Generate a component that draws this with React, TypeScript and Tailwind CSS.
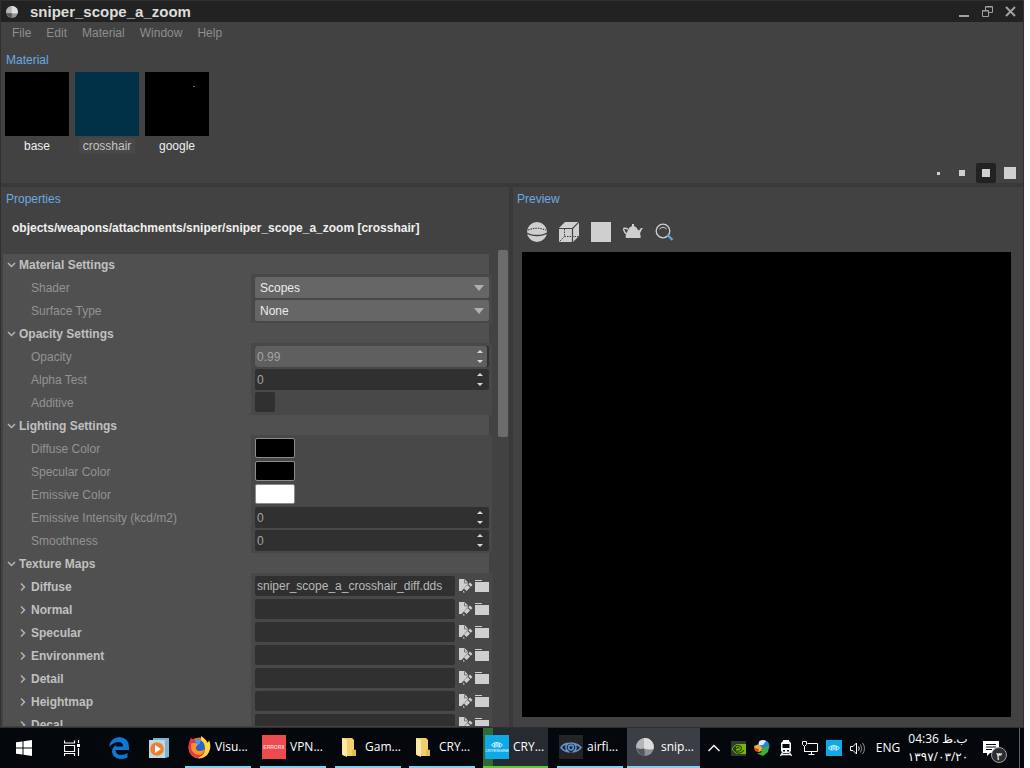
import React, { useState } from "react";

const materials = [
  { name: "base", color: "bg-black" },
  { name: "crosshair", color: "bg-[#003146]" },
  { name: "google", color: "bg-black" },
];

const textures = ["Diffuse", "Normal", "Specular", "Environment", "Detail", "Heightmap", "Decal"];

const MaterialLogo = ({ size }: { size: number }) => (
  <svg width={size} height={size} viewBox="0 0 18 18" className="shrink-0">
    <circle cx="9" cy="9" r="9" fill="#8f9192" />
    <path d="M8 0 Q13 -.5 16 3.500 Q18.500 7 17.500 11 Q13 12 8 10.500Z" fill="#dedede" />
    <path d="M8 0 V10.500 Q4 11.500 .5 10 Q-.5 6 2.500 3 Q5 .5 8 0Z" fill="#b3b5b6" />
    <path d="M.5 10 Q4 11.500 8 10.500 Q9.500 14 8.500 18 Q3 17.500 .5 10Z" fill="#55575a" />
  </svg>
);

const EyeMark = ({ width, color }: { width: number; color: string }) => (
  <svg width={width} height={width / 2} viewBox="0 0 24 12" fill="none" stroke={color} strokeWidth="1.700">
    <path d="M9 1.500 Q4 2 1 6 Q4 10 9 10.500 Q6.500 8.500 6.500 6 Q6.500 2.500 9.500 1.500 Q12 .5 14.500 1.500 Q20 2.500 23 6 Q20 10 15 10.500 Q17.500 8.500 17.500 6 Q17.500 3.500 15.500 2" />
    <circle cx="12" cy="6" r="2.600" />
  </svg>
);

const Chevron = ({ open }: { open: boolean }) => (
  <svg width="9" height="9" viewBox="0 0 9 9" fill="none" stroke="#b4b4b4" strokeWidth="1.500" className="shrink-0">
    <path d={open ? "M1 2 L4.500 5.500 L8 2" : "M2 .5 L5.500 4 L2 7.500"} />
  </svg>
);

const Section = ({ title, children }: { title: string; children: React.ReactNode }) => {
  const [open, setOpen] = useState(true);
  return (
    <section>
      <h3 className="mr-[3px] h-5 bg-[#505050]">
        <button
          onClick={() => setOpen(!open)}
          aria-expanded={open}
          className="flex h-[22px] w-full items-center gap-[3px] pl-1 font-bold text-[#c0c0c0]"
        >
          <Chevron open={open} />
          {title}
        </button>
      </h3>
      {open && <div className="flex flex-col">{children}</div>}
    </section>
  );
};

// first row of a section carries the 3px top edge of the value column
const rowClass = "flex first:[&>*]:pt-[3px]";

const Row = ({ id, label, children }: { id: string; label: string; children: React.ReactNode }) => (
  <div className={rowClass}>
    <div className="w-[248px] shrink-0 bg-[#505050] pl-7 text-[#939393]">
      <label htmlFor={id} className="flex h-[23px] items-center pb-px">{label}</label>
    </div>
    <div className="min-w-0 flex-1 bg-[#484848] pr-[3px] pl-1">
      <div className="h-[23px]">{children}</div>
    </div>
  </div>
);

const SelectBox = ({ id, options }: { id: string; options: string[] }) => (
  <div className="relative">
    <select id={id} className="h-[21px] w-full appearance-none rounded-xs bg-[#666666] pl-[5px] text-[#ececec]">
      {options.map((o) => (
        <option key={o}>{o}</option>
      ))}
    </select>
    <svg width="10" height="6" viewBox="0 0 10 6" className="pointer-events-none absolute top-2 right-[5px]">
      <path d="M0 0 H10 L5 6Z" fill="#b0b0b0" />
    </svg>
  </div>
);

const NumberBox = ({ id, initial, fill = 0 }: { id: string; initial: string; fill?: number }) => {
  const [value, setValue] = useState(initial);
  const step = (d: number) => setValue(String(Number(value) + d));
  return (
    <div className="relative flex h-[21px] overflow-hidden rounded-xs bg-[#303030]">
      <div className="absolute inset-y-0 left-0 rounded-xs bg-[#5f5f5f]" style={{ width: `${fill}%` }} />
      <input
        id={id}
        value={value}
        onChange={(e) => setValue(e.target.value)}
        className="relative min-w-0 flex-1 pl-0.5 text-[#a4a4a4] outline-none"
      />
      <div className="relative flex w-[19px] flex-col items-center justify-between py-1">
        <button aria-label="Increase" onClick={() => step(1)} className="block">
          <svg width="6" height="3" viewBox="0 0 6 3" className="block"><path d="M0 3 L3 0 L6 3Z" fill="#d8d8d8" /></svg>
        </button>
        <button aria-label="Decrease" onClick={() => step(-1)} className="block">
          <svg width="6" height="3" viewBox="0 0 6 3" className="block"><path d="M0 0 L3 3 L6 0Z" fill="#d8d8d8" /></svg>
        </button>
      </div>
    </div>
  );
};

const Swatch = ({ id, color }: { id: string; color: string }) => (
  <button id={id} className={`block h-5 w-10 rounded-xs border border-[#8c8c8c] ${color}`} />
);

const TextureRow = ({ name, file }: { name: string; file: string }) => (
  <div className={rowClass}>
    <div className="w-[248px] shrink-0 bg-[#505050] pl-4">
      <div className="flex h-[22px] items-center gap-[3px]">
        <button aria-label={`Expand ${name}`}><Chevron open={false} /></button>
        <label htmlFor={name} className="font-bold text-[#c0c0c0]">{name}</label>
      </div>
    </div>
    <div className="min-w-0 flex-1 bg-[#484848] pr-[3px] pl-1">
      <div className="flex h-[23px]">
        <input
          id={name}
          defaultValue={file}
          className="h-5 min-w-0 flex-1 rounded-xs bg-[#303030] pl-0.5 text-[#b9b9b9] outline-none"
        />
        <button aria-label={`Edit ${name}`} className="ml-1 h-5">
          <svg width="14" height="14" viewBox="0 0 14 14" className="block">
            <path d="M0 0 H5.500 L9 3.500 V5 L2.500 12 H0Z" fill="#cfcfcf" />
            <path d="M5.500 .5 V4 H9" fill="none" stroke="#777777" />
            <path d="M11 3.500 L13.500 6 L11.800 7.700 L9.300 5.200Z M8.600 6 L11 8.400 L7.500 12 L5 9.600Z M4.200 11.500 L6 13.200 L4.200 13.800Z" fill="#cfcfcf" />
          </svg>
        </button>
        <button aria-label={`Browse ${name}`} className="ml-0.5 h-5">
          <svg width="14" height="14" viewBox="0 0 14 14" fill="#cfcfcf" className="block">
            <path d="M0 1 H7 V2 H0Z M0 3 H14 V13 H0Z" />
          </svg>
        </button>
      </div>
    </div>
  </div>
);

const PreviewTools = () => (
  <div className="flex h-5 gap-3 pl-[14px]">
    <button aria-label="Sphere">
      <svg width="20" height="20" viewBox="0 0 20 20">
        <circle cx="10" cy="10" r="10" fill="#cfcfcf" />
        <path d="M0 11 Q3 13.500 10 13.500 Q17 13.500 20 11" fill="none" stroke="#424242" strokeWidth="1.300" />
        <path d="M1 8 Q10 4.500 19 8" fill="none" stroke="#424242" strokeWidth="1.200" strokeDasharray="1.500 1" />
      </svg>
    </button>
    <button aria-label="Box">
      <svg width="20" height="20" viewBox="0 0 20 20">
        <path d="M0 6 L6 0 H20 V14 L14 20 H0Z" fill="#cfcfcf" />
        <path d="M0 6.500 H13.500 V20 M13.500 6.500 L20 0" fill="none" stroke="#424242" strokeWidth="1.200" />
        <path d="M5.500 7 V14.500 H20 M5.500 14.500 L0 20" fill="none" stroke="#424242" strokeDasharray="1.500 1" />
      </svg>
    </button>
    <button aria-label="Plane">
      <svg width="20" height="20" viewBox="0 0 20 20"><path d="M0 0 H20 V20 H0Z" fill="#cfcfcf" /></svg>
    </button>
    <button aria-label="Teapot">
      <svg width="20" height="20" viewBox="0 0 20 20">
        <path d="M9 2 H11 V4 Q14 5 15 8 L16 8.500 L18 6 H20 Q18 8 17 11.500 Q18 14 17.500 16 H3 Q2 14 3.500 11 L5 8 Q6 5 9 4Z" fill="#cfcfcf" />
        <path d="M5 7 Q0 5 .8 8 Q1.500 11 4 12.500" fill="none" stroke="#cfcfcf" strokeWidth="1.400" />
      </svg>
    </button>
    <button aria-label="Zoom">
      <svg width="20" height="20" viewBox="0 0 20 20" fill="none">
        <circle cx="8" cy="9" r="6.800" stroke="#cfcfcf" strokeWidth="1.300" />
        <path d="M4.500 7 Q8 3.500 11.500 7" stroke="#cfcfcf" />
        <path d="M12.500 13 L17.500 18" stroke="#5aa5e0" strokeWidth="2.400" />
      </svg>
    </button>
  </div>
);

const EditorWindow = () => (
  <div className="flex min-h-0 flex-1 flex-col border border-[#303030] bg-[#424242] font-['Liberation_Sans',Arial,sans-serif] text-[12px] leading-4">
    <header className="flex h-[21px] shrink-0 items-center bg-[#222222] pr-[7px] pl-[5px]">
      <MaterialLogo size={12} />
      <h1 className="ml-3 flex-1 text-[15px] font-bold text-[#dddddd]">sniper_scope_a_zoom</h1>
      <div className="flex gap-3 text-[#a0a0a0]">
        <button aria-label="Minimize">
          <svg width="11" height="11" viewBox="0 0 11 11" fill="currentColor"><path d="M0 9 H10 V11 H0Z" /></svg>
        </button>
        <button aria-label="Restore">
          <svg width="11" height="11" viewBox="0 0 11 11" fill="none" stroke="currentColor">
            <path d="M.5 4.500 H6.500 V10.500 H.5Z M.5 5 H6.500 M3.500 4 V.5 H10.500 V6.500 H7 M3.500 1 H10.500" />
          </svg>
        </button>
        <button aria-label="Close">
          <svg width="11" height="11" viewBox="0 0 11 11" stroke="currentColor" strokeWidth="2">
            <path d="M1 1 L10 10 M10 1 L1 10" />
          </svg>
        </button>
      </div>
    </header>

    <nav className="flex h-[22px] shrink-0 items-center gap-[15px] pl-[11px] text-[#8e8e8e]">
      <button>File</button>
      <button>Edit</button>
      <button>Material</button>
      <button>Window</button>
      <button>Help</button>
    </nav>

    <section className="flex h-[139px] shrink-0 flex-col pt-2">
      <h2 className="pl-[5px] text-[#6aaae0]">Material</h2>
      <div className="mt-1 flex gap-1.5 pl-1">
        {materials.map((m) => (
          <button key={m.name} className="flex w-16 flex-col items-center gap-0.5">
            <span className={`relative h-16 w-16 ${m.color}`}>
              {m.name === "google" && <span className="absolute top-[14px] right-[14px] h-px w-0.5 bg-[#666666]" />}
            </span>
            <span className={m.name === "crosshair" ? "bg-[#484848] px-1 text-[#c4c4c4]" : "text-[#eeeeee]"}>
              {m.name}
            </span>
          </button>
        ))}
      </div>
      <div className="mt-auto flex justify-end gap-1 pr-[3px]">
        <button aria-label="Tiny thumbnails" className="grid h-5 w-5 place-items-center"><span className="h-[3px] w-[3px] bg-[#cfcfcf]" /></button>
        <button aria-label="Small thumbnails" className="grid h-5 w-5 place-items-center"><span className="h-1.5 w-1.5 bg-[#cfcfcf]" /></button>
        <button aria-label="Medium thumbnails" className="grid h-5 w-5 place-items-center rounded-xs bg-[#222222]"><span className="h-2 w-2 bg-[#cfcfcf]" /></button>
        <button aria-label="Large thumbnails" className="grid h-5 w-5 place-items-center"><span className="h-3 w-3 bg-[#cfcfcf]" /></button>
      </div>
    </section>

    <div className="h-1 shrink-0 bg-[#393939]" />

    <div className="grid min-h-0 flex-1 grid-cols-[minmax(0,508fr)_4px_minmax(0,510fr)] grid-rows-[minmax(0,1fr)]">
      <section className="flex min-h-0 flex-col pt-1 pb-px">
        <h2 className="pl-[5px] text-[#6aaae0]">Properties</h2>
        <p className="mt-[13px] pl-[11px] font-bold text-[#f0f0f0]">
          objects/weapons/attachments/sniper/sniper_scope_a_zoom [crosshair]
        </p>
        <div className="mt-[14px] flex min-h-0 flex-1 pl-0.5">
          <div className="mt-1 min-w-0 flex-1 overflow-hidden">
            <Section title="Material Settings">
              <Row id="shader" label="Shader"><SelectBox id="shader" options={["Scopes"]} /></Row>
              <Row id="surface" label="Surface Type"><SelectBox id="surface" options={["None"]} /></Row>
            </Section>
            <Section title="Opacity Settings">
              <Row id="opacity" label="Opacity"><NumberBox id="opacity" initial="0.99" fill={99} /></Row>
              <Row id="alpha" label="Alpha Test"><NumberBox id="alpha" initial="0" /></Row>
              <Row id="additive" label="Additive">
                <input id="additive" type="checkbox" className="block h-5 w-5 appearance-none rounded-xs bg-[#303030] checked:bg-[#6aaae0]" />
              </Row>
            </Section>
            <Section title="Lighting Settings">
              <Row id="diffuse-color" label="Diffuse Color"><Swatch id="diffuse-color" color="bg-black" /></Row>
              <Row id="specular-color" label="Specular Color"><Swatch id="specular-color" color="bg-black" /></Row>
              <Row id="emissive-color" label="Emissive Color"><Swatch id="emissive-color" color="bg-white" /></Row>
              <Row id="intensity" label="Emissive Intensity (kcd/m2)"><NumberBox id="intensity" initial="0" /></Row>
              <Row id="smoothness" label="Smoothness"><NumberBox id="smoothness" initial="0" /></Row>
            </Section>
            <Section title="Texture Maps">
              {textures.map((t) => (
                <TextureRow key={t} name={t} file={t === "Diffuse" ? "sniper_scope_a_crosshair_diff.dds" : ""} />
              ))}
            </Section>
          </div>
          <div className="w-[17px] shrink-0 pl-1.5">
            <div className="h-[187px] w-[10px] rounded-xs bg-[#6c6c6c]" />
          </div>
        </div>
      </section>

      <div className="bg-[#393939]" />

      <section className="flex min-h-0 flex-col pt-1">
        <h2 className="pl-1 text-[#6aaae0]">Preview</h2>
        <div className="mt-[15px]"><PreviewTools /></div>
        <div className="mt-2.5 mr-3 mb-2.5 ml-[9px] flex-1 bg-black" />
      </section>
    </div>
  </div>
);

const FolderIcon = () => (
  <svg width="16" height="20" viewBox="0 0 16 20" className="block">
    <path d="M1 1 H11 L13 3 V19 H3 L1 17Z" fill="#f3cf6b" />
    <path d="M1 1 L6 3 V20 L1 17.500Z" fill="#ffe9a6" />
    <path d="M11 12 L15 13 V19 H11Z" fill="#e8bb4c" />
  </svg>
);

const tasks = [
  {
    name: "Visu...",
    className: "ml-[6px] w-[66px] border-[#76d5f5]",
    icon: (
      <svg width="24" height="24" viewBox="0 0 24 24">
        <circle cx="12" cy="13" r="10.500" fill="#f4632a" />
        <path d="M2 8 Q3 4 4 3 Q6 5 9 5 L8 9 Q5 12 8 16 Q12 20 17 16 L21 19 Q13 27 5 20 Q0 15 2 8Z" fill="#e8334a" />
        <circle cx="12.500" cy="11.500" r="6" fill="#2a62c9" />
        <path d="M8 5 Q12 3 15 6 Q12 7 13 9 L9 10Z" fill="#37a0ea" />
        <path d="M14 1 Q19 4 20 8 Q23 6 21.500 4 Q25 11 22 17 Q18 24 11 23 Q18 20 18 14 Q18 8 14 5Z" fill="#ffd83d" />
        <path d="M4 9 Q7 7 11 9.500 L9 12 Q8 15 12 16 Q16 16 17 14 Q17 20 11 20 Q3 18 4 9Z" fill="#ff9526" />
      </svg>
    ),
  },
  {
    name: "VPN...",
    className: "ml-[9px] w-[66px] border-[#76d5f5]",
    icon: (
      <span className="grid h-6 w-6 place-items-center bg-[#ec4a4f] font-['Liberation_Sans',sans-serif] text-[5px] font-bold text-[#ffd0cc]">
        ERRORX
      </span>
    ),
  },
  { name: "Gam...", className: "ml-[9px] w-[66px] border-[#76d5f5]", icon: <FolderIcon /> },
  { name: "CRY...", className: "ml-2 w-[66px] border-[#76d5f5]", icon: <FolderIcon /> },
  {
    name: "CRY...",
    className: "ml-2 w-[65px] border-[#4fd02b] bg-linear-to-r from-[#2f6a35] from-15% to-[#262b31] to-15%",
    icon: (
      <span className="flex h-6 w-6 flex-col items-center justify-center gap-px bg-[#0fa9e6]">
        <EyeMark width={12} color="#ffffff" />
        <span className="font-['Liberation_Sans',sans-serif] text-[4px] leading-none text-white">CRYENGINE</span>
      </span>
    ),
  },
  {
    name: "airfi...",
    className: "ml-[9px] w-[66px] border-[#76d5f5]",
    icon: <span className="grid h-6 w-6 place-items-center bg-[#242424]"><EyeMark width={22} color="#5c94d0" /></span>,
  },
  { name: "snip...", className: "ml-1 w-[73px] border-[#76d5f5] bg-[#3b3f45] pl-1.5", icon: <MaterialLogo size={18} /> },
];

const Taskbar = () => (
  <footer className="flex h-10 shrink-0 items-center bg-[#04070c] font-['Open_Sans','Noto_Sans',sans-serif] text-[12px] leading-4 text-white">
    <button aria-label="Start" className="grid w-12 place-items-center">
      <svg width="16" height="16" viewBox="0 0 16 16" fill="#fff">
        <path d="M0 2.300 L6.500 1.400 V7.500 H0Z M7.500 1.200 L16 0 V7.500 H7.500Z M0 8.500 H6.500 V14.600 L0 13.700Z M7.500 8.500 H16 V16 L7.500 14.800Z" />
      </svg>
    </button>
    <button aria-label="Task view" className="grid w-12 place-items-center">
      <svg width="16" height="16" viewBox="0 0 16 16" fill="none" stroke="#fff" strokeWidth="1.200">
        <path d="M.5 .5 V3 H10.500 V.5 M.5 5.500 H10.500 V11.500 H.5Z M.5 16 V13.500 H10.500 V16 M14.500 0 V3 M14.500 8 V16" />
        <path d="M13 4 H16 V7 H13Z" fill="#fff" stroke="none" />
      </svg>
    </button>
    <button aria-label="Edge" className="grid w-[46px] place-items-center">
      <svg width="20" height="22" viewBox="0 0 20 22" fill="#0a78d6">
        <path d="M0 10 Q1 1 10.500 0 Q20 1 20 10 V13 H6.500 Q7 18 12 18 Q16 18 18.500 16 V20.500 Q15 22 11 22 Q4 21 3 15 Q3 10 8 7 Q6.500 8.500 6.500 9.500 H14 Q14 5 9.500 5 Q4 5.500 0 10Z" />
      </svg>
    </button>
    <button aria-label="Media player" className="grid w-[37px] place-items-center pr-1">
      <svg width="20" height="20" viewBox="0 0 20 20">
        <path d="M4 0 H20 V19 L16 20 V2 H4Z" fill="#7db4c8" />
        <path d="M0 2 H16 V20 H0Z" fill="#b8dbe8" />
        <circle cx="8" cy="11" r="6.800" fill="#f07f2c" />
        <path d="M6 7 L12 11 L6 15Z" fill="#fff" />
      </svg>
    </button>

    {tasks.map((t, i) => (
      <button key={i} className={`flex h-full shrink-0 items-center gap-1 border-b-2 pl-0.5 ${t.className}`}>
        <span className="grid w-6 shrink-0 place-items-center">{t.icon}</span>
        <span className="whitespace-nowrap">{t.name}</span>
      </button>
    ))}

    <div className="ml-auto flex h-full items-center">
      <button aria-label="Show hidden icons" className="grid w-6 place-items-center">
        <svg width="12" height="8" viewBox="0 0 12 8" fill="none" stroke="#fff" strokeWidth="1.400"><path d="M.5 7 L6 1.500 L11.500 7" /></svg>
      </button>
      <button aria-label="Nvidia" className="grid w-6 place-items-center">
        <svg width="15" height="15" viewBox="0 0 15 15">
          <path d="M0 0 H15 V15 H0Z" fill="#2d3b33" />
          <path d="M5 3 H15 V13 H5Z" fill="#76b900" />
          <path d="M1 8 Q5 3 9 5 Q12 7 9 9.500 Q7 11 5.500 9.500 M3 8 Q5 13 9 12 Q12 11 13 9 M5 8 Q7 5.500 8.500 7.500" fill="none" stroke="#26420b" strokeWidth="1.100" />
          <path d="M1 8 Q3 4.500 5 4 M1 8 Q3 11 5 12" fill="none" stroke="#76b900" />
        </svg>
      </button>
      <button aria-label="Download manager" className="grid w-6 place-items-center">
        <svg width="16" height="16" viewBox="0 0 16 16">
          <circle cx="9.500" cy="6" r="6" fill="#2b83d8" />
          <path d="M5 1.500 Q9 -1 12 1 L9 5 L5 5Z" fill="#dcefff" />
          <path d="M0 6 L4 4.500 L7 6 L9 10 L5 12 L1 10Z" fill="#f0b32c" />
          <path d="M0 8 L5 9 L4 12 L1 11Z" fill="#d9402e" />
          <path d="M7 9 L15 6 L14 12 L9 16 L3 13.500 L8 12Z" fill="#3fae36" />
        </svg>
      </button>
      <button aria-label="Train" className="grid w-6 place-items-center">
        <svg width="12" height="16" viewBox="0 0 12 16">
          <path d="M3 0 H9 V1 L11 3 V11 L9 13 H3 L1 11 V3 L3 1Z" fill="#fff" />
          <path d="M2.500 4 H9.500 V8 H2.500Z M3 10 H5 V11.500 H3Z M7 10 H9 V11.500 H7Z" fill="#04070c" />
          <path d="M2.500 12.500 L.5 16 M9.500 12.500 L11.500 16 M2 14.500 H10" stroke="#fff" strokeWidth="1.300" />
        </svg>
      </button>
      <button aria-label="Network" className="grid w-6 place-items-center">
        <svg width="16" height="14" viewBox="0 0 16 14" fill="none" stroke="#fff">
          <path d="M5.500 2.500 H15.500 V10.500 H3 M9.500 10.500 V13 M6.500 13.500 H12.500 M2.500 5.500 V11 M.5 .5 H4.500 V3.500 L2.500 5.500 L.5 3.500Z" />
        </svg>
      </button>
      <button aria-label="Launcher" className="grid w-6 place-items-center">
        <span className="grid h-4 w-4 place-items-center bg-[#0fa9e6]"><EyeMark width={12} color="#ffffff" /></span>
      </button>
      <button aria-label="Volume" className="grid w-6 place-items-center">
        <svg width="16" height="13" viewBox="0 0 16 13" fill="none" stroke="#fff">
          <path d="M.5 4.500 H3 L6.500 1 V12 L3 8.500 H.5Z M8.500 4.500 Q10 6.500 8.500 8.500" />
          <path d="M10.500 2.500 Q13 6.500 10.500 10.500 M12.500 .8 Q16.500 6.500 12.500 12.200" stroke="#8f9194" />
        </svg>
      </button>
      <button className="w-9">ENG</button>
      <div dir="rtl" className="w-[64px] text-center font-['Open_Sans','DejaVu_Sans',sans-serif] leading-[18px]">
        <div>ب.ظ 04:36</div>
        <div>١٣٩٧/٠٣/٢٠</div>
      </div>
      <button aria-label="Notifications, 3 new" className="relative ml-[13px] h-4 w-4">
        <svg width="17" height="15" viewBox="0 0 17 15">
          <path d="M0 0 H16 V12 H7 L4 15 V12 H0Z" fill="#fff" />
          <path d="M3 3.500 H13 M3 6 H13 M3 8.500 H9" stroke="#04070c" />
        </svg>
        <span className="absolute top-[7px] left-2 grid h-4 w-4 place-items-center rounded-full border border-[#a0a0a0] bg-[#2b2d30] text-[11px] leading-none">٣</span>
      </button>
      <div className="ml-5 h-full w-[5px] border-l border-[#5c5e62]" />
    </div>
  </footer>
);

const App = () => (
  <div className="flex h-screen flex-col overflow-hidden bg-white pr-1.5">
    <EditorWindow />
    <Taskbar />
  </div>
);

export default App;
